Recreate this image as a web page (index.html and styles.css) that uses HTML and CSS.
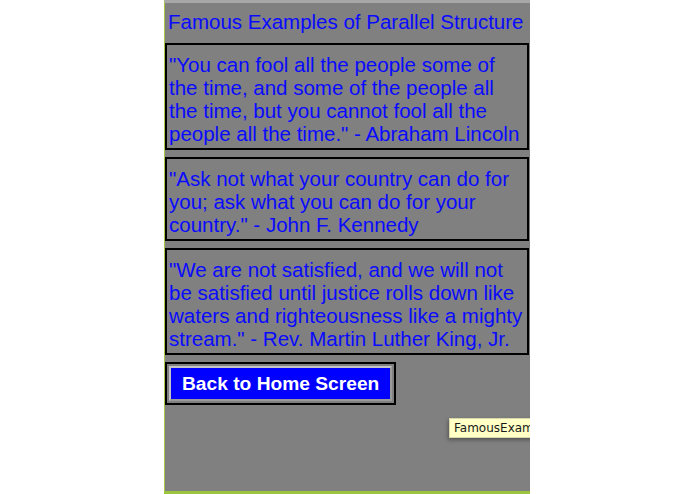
FILE: index.html
```html
<!DOCTYPE html>
<html>
<head>
<meta charset="utf-8">
<title>Famous Examples of Parallel Structure</title>
<link rel="stylesheet" href="styles.css">
</head>
<body>
<div class="panel">
  <h1 class="title">Famous Examples of Parallel Structure</h1>
  <div class="quote">"You can fool all the people some of the time, and some of the people all the time, but you cannot fool all the people all the time." - Abraham Lincoln</div>
  <div class="quote">"Ask not what your country can do for you; ask what you can do for your country." - John F. Kennedy</div>
  <div class="quote">"We are not satisfied, and we will not be satisfied until justice rolls down like waters and righteousness like a mighty stream." - Rev. Martin Luther King, Jr.</div>
  <div class="btn-row">
    <div class="btn-frame"><span class="btn">Back to Home Screen</span></div>
  </div>
  <div class="tooltip">FamousExamples</div>
</div>
</body>
</html>
```

FILE: styles.css
```css
html, body {
  margin: 0;
  padding: 0;
  background: #ffffff;
}

.panel {
  position: relative;
  overflow: hidden;
  box-sizing: border-box;
  margin-left: 164px;
  width: 366px;
  height: 494px;
  background: #808080;
  border-left: 1px solid #a9c94a;
  border-top: 3px solid #a7a7a7;
  border-bottom: 3px solid #9cc43e;
  font-family: "Liberation Sans", Arial, Helvetica, sans-serif;
}

.title {
  margin: 0 0 10px 0;
  padding: 7px 0 0 3px;
  font-size: 20.5px;
  line-height: 23px;
  font-weight: normal;
  color: #0a0aff;
  white-space: nowrap;
}

.quote {
  margin: 0 1px 7px 0;
  padding: 8px 2px 3px 2px;
  border: 2px solid #000000;
  font-size: 20.5px;
  line-height: 23px;
  color: #0a0aff;
}

.btn-row {
  display: flex;
}

.btn-frame {
  border: 2px solid #000000;
  padding: 2px;
}

.btn {
  display: block;
  padding: 0 11px;
  border: 2px solid;
  border-color: #c4c4c4 #9a9a9a #9a9a9a #c4c4c4;
  background: #0000ff;
  color: #ffffff;
  font-size: 19.2px;
  font-weight: bold;
  line-height: 31px;
  white-space: nowrap;
}

.tooltip {
  position: absolute;
  left: 284px;
  top: 415px;
  padding: 2px 4px;
  background: #ffffc6;
  border: 1px solid #d8d8a8;
  box-shadow: -1px 2px 4px rgba(0, 0, 0, 0.35);
  font-family: "DejaVu Sans", "Liberation Sans", sans-serif;
  font-size: 12px;
  line-height: 14px;
  color: #1a1a1a;
  white-space: nowrap;
}
```
